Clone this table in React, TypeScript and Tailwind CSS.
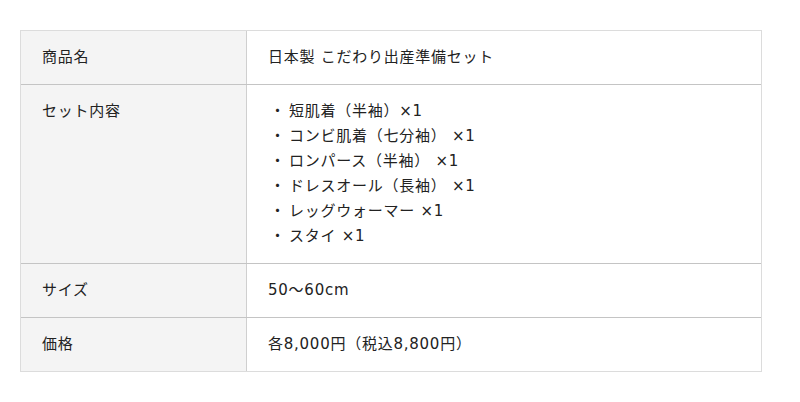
import React from "react";

const rows: { label: string; value: React.ReactNode }[] = [
  { label: "商品名", value: "日本製 こだわり出産準備セット" },
  {
    label: "セット内容",
    value: (
      <ul>
        {[
          "短肌着（半袖）×1",
          "コンビ肌着（七分袖） ×1",
          "ロンパース（半袖） ×1",
          "ドレスオール（長袖） ×1",
          "レッグウォーマー ×1",
          "スタイ ×1",
        ].map((item) => (
          <li key={item} className="flex">
            <span className="w-[21px] shrink-0 pl-[2px]">・</span>
            <span>{item}</span>
          </li>
        ))}
      </ul>
    ),
  },
  { label: "サイズ", value: "50〜60cm" },
  { label: "価格", value: "各8,000円（税込8,800円）" },
];

export default function App() {
  return (
    <div
      className="min-h-[402px] bg-white pt-[30px] pl-[20px] text-[15px] leading-[25px] tracking-[0.05em] text-[#222]"
      style={{ fontFamily: '"DejaVu Sans", "Noto Sans CJK JP", sans-serif' }}
    >
      <div className="w-[742px] border border-[#dcdcdc]">
        {rows.map((row, i) => (
          <div
            key={row.label}
            className={`grid grid-cols-[226px_1fr] ${i > 0 ? "border-t border-[#c4c4c4]" : ""}`}
          >
            <div className="bg-[#f4f4f4] border-r border-[#cfcfcf] px-[21px] py-[14px]">{row.label}</div>
            <div className="px-[21px] py-[14px]">{row.value}</div>
          </div>
        ))}
      </div>
    </div>
  );
}
